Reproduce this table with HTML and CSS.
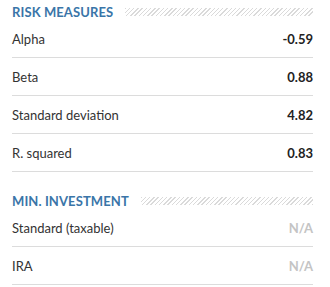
FILE: index.html
```html
<!DOCTYPE html>
<html>
<head>
<meta charset="utf-8">
<link rel="stylesheet" href="styles.css">
</head>
<body>
<div class="panel">
  <div class="section-head"><span class="title">RISK MEASURES</span><span class="hatch"></span></div>
  <div class="row"><span class="label">Alpha</span><span class="value">-0.59</span></div>
  <div class="row"><span class="label">Beta</span><span class="value">0.88</span></div>
  <div class="row"><span class="label">Standard deviation</span><span class="value">4.82</span></div>
  <div class="row"><span class="label">R. squared</span><span class="value">0.83</span></div>
  <div class="section-head second"><span class="title">MIN. INVESTMENT</span><span class="hatch"></span></div>
  <div class="row"><span class="label">Standard (taxable)</span><span class="value na">N/A</span></div>
  <div class="row"><span class="label">IRA</span><span class="value na">N/A</span></div>
</div>
</body>
</html>
```
FILE: styles.css
```css
html, body { margin: 0; padding: 0; background: #fff; }
body { font-family: Lato, "Open Sans", sans-serif; color: #333; }
.panel { width: 301px; margin-left: 12px; padding-top: 3px; }
.section-head { display: flex; align-items: center; gap: 12px; height: 17px; }
.section-head.second { margin-top: 20px; }
.title { font-size: 13px; font-weight: 700; color: #3a75a8; letter-spacing: 0.1px; white-space: nowrap; }
.hatch { flex: 1; height: 8px; background: repeating-linear-gradient(135deg, #dadada 0 1px, #fff 1px 3px); }
.row { display: flex; justify-content: space-between; align-items: center; height: 37px; border-bottom: 1px solid #dcdcdc; font-size: 13px; }
.label { color: #333; }
.value { font-weight: 700; color: #222; }
.value.na { color: #c4c4c4; }
```
